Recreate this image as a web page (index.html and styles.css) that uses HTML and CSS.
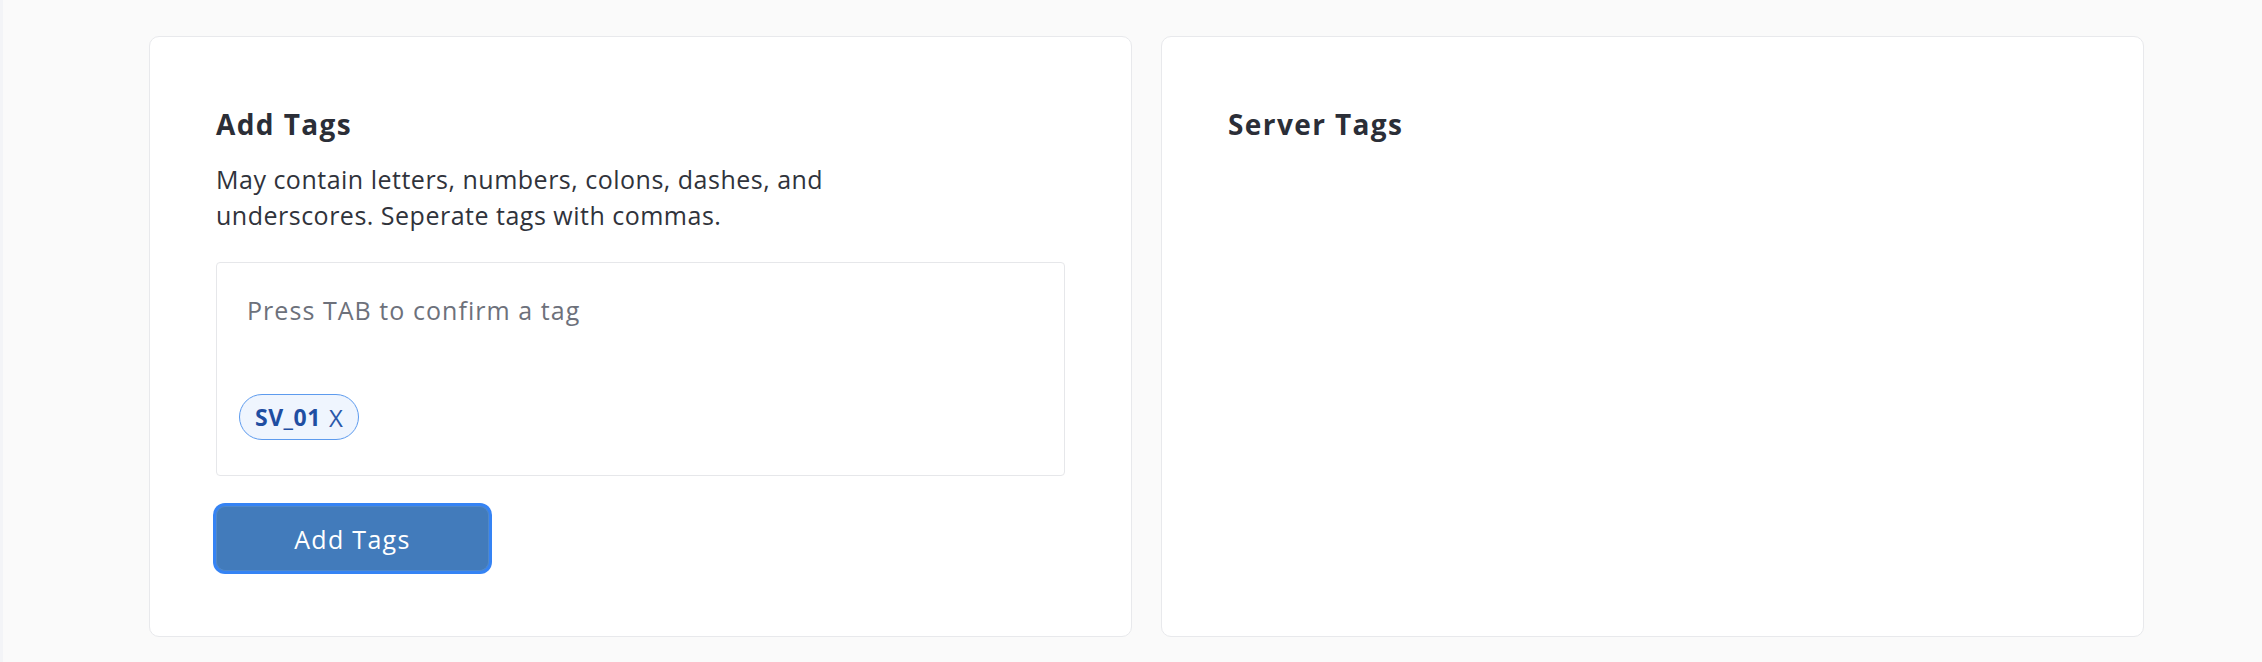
FILE: index.html
```html
<!DOCTYPE html>
<html lang="en">
<head>
<meta charset="utf-8">
<title>Tags</title>
<link rel="stylesheet" href="styles.css">
</head>
<body>
<main class="page">
  <section class="card">
    <h2 class="card-title">Add Tags</h2>
    <p class="card-desc">May contain letters, numbers, colons, dashes, and underscores. Seperate tags with commas.</p>
    <div class="tag-input">
      <div class="tag-placeholder">Press TAB to confirm a tag</div>
      <div class="tag-list">
        <span class="chip"><span class="chip-name">SV_01</span><span class="chip-x">X</span></span>
      </div>
    </div>
    <button class="btn-primary" type="button">Add Tags</button>
  </section>
  <section class="card">
    <h2 class="card-title">Server Tags</h2>
  </section>
</main>
</body>
</html>
```

FILE: styles.css
```css
html, body {
  margin: 0;
  padding: 0;
}
body {
  background: #fafafa;
  border-left: 3px solid #f3f4f7;
  min-height: 662px;
  box-sizing: border-box;
  font-family: "Open Sans", Lato, sans-serif;
  color: #2f323a;
}
.page {
  display: flex;
  gap: 29px;
  padding: 36px 0 0 146px;
}
.card {
  flex: 0 0 983px;
  box-sizing: border-box;
  height: 601px;
  background: #ffffff;
  border: 1px solid #e8e9ec;
  border-radius: 10px;
  padding: 70px 66px 0 66px;
}
.card-title {
  margin: 0;
  font-size: 28px;
  line-height: 34px;
  font-weight: 700;
  color: #2b2e37;
  letter-spacing: 1.4px;
}
.card-desc {
  margin: 20px 0 0 0;
  max-width: 660px;
  font-size: 25px;
  line-height: 36px;
  color: #30333b;
  letter-spacing: 0.5px;
}
.tag-input {
  margin-top: 29px;
  box-sizing: border-box;
  width: 849px;
  height: 214px;
  border: 1px solid #e6e7ea;
  border-radius: 4px;
  padding: 29px 22px 0 22px;
  display: flex;
  flex-direction: column;
}
.tag-placeholder {
  padding-left: 8px;
  font-size: 25px;
  line-height: 36px;
  color: #6d717b;
  letter-spacing: 1.05px;
}
.tag-list {
  margin-top: 66px;
  display: flex;
  gap: 8px;
}
.chip {
  box-sizing: border-box;
  height: 46px;
  display: inline-flex;
  align-items: center;
  gap: 8px;
  padding: 0 15px 0 15px;
  border: 1px solid #5d9bee;
  border-radius: 23px;
  background: #eff5fe;
  color: #1f4ea2;
  font-size: 23px;
}
.chip-name {
  font-weight: 700;
  letter-spacing: 0.5px;
}
.chip-x {
  font-weight: 400;
  font-size: 24px;
  color: #2a58aa;
}
.btn-primary {
  display: block;
  margin-top: 30px;
  box-sizing: border-box;
  width: 273px;
  height: 65px;
  border: 1px solid #4f88c9;
  border-radius: 9px;
  background: #427bbb;
  box-shadow: 0 0 0 3px #3583f4;
  color: #ffffff;
  font-family: "Open Sans", Lato, sans-serif;
  font-size: 25px;
  letter-spacing: 1.3px;
  padding: 0;
  cursor: pointer;
}
```
